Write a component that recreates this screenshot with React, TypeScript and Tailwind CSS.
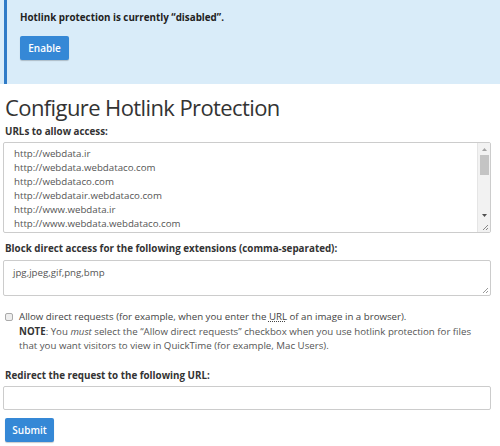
import React from 'react';

const urls = [
  'http://webdata.ir',
  'http://webdata.webdataco.com',
  'http://webdataco.com',
  'http://webdatair.webdataco.com',
  'http://www.webdata.ir',
  'http://www.webdata.webdataco.com',
  'http://webdataco.ir',
];

export default function App() {
  return (
    <div className="w-[500px] h-[446px] overflow-hidden bg-white text-[#333] font-['Open_Sans',sans-serif]">
      {/* Alert */}
      <div className="bg-[#d9ecf9] pl-[4px] h-[84px]">
        <div className="h-full border-l-[3px] border-[#2f7bc7] pl-[13px] pt-[9px]">
          <p className="text-[9.8px] font-bold leading-[18px] text-[#222]">
            Hotlink protection is currently “disabled”.
          </p>
          <button className="mt-[9px] h-[24px] w-[49px] rounded-[2px] bg-[#3588d6] text-white text-[10px] font-semibold shadow-[0_1px_1px_rgba(0,0,0,0.2)]">
            Enable
          </button>
        </div>
      </div>

      <div className="px-[3px]">
        <h1 className="mt-[8px] ml-[2px] text-[22px] tracking-[-0.6px] leading-[30px] font-normal text-[#333]">
          Configure Hotlink Protection
        </h1>

        <label className="block ml-[2px] mt-[1px] text-[9.8px] font-bold leading-[17px]">URLs to allow access:</label>
        <div className="mt-[2px] w-[488px] h-[91px] border border-[#ccc] rounded-[2px] flex overflow-hidden">
          <div className="flex-1 pl-[10px] pt-[4px] text-[9.7px] leading-[14px] text-[#555]">
            {urls.map((u) => (
              <div key={u}>{u}</div>
            ))}
          </div>
          <div className="w-[13px] flex flex-col items-center bg-[#f2f2f2] border-l border-[#e5e5e5]">
            <svg width="9" height="9" viewBox="0 0 9 9" className="mt-[2px]">
              <path d="M2 6 L4.5 3 L7 6 Z" fill="#a3a3a3" />
            </svg>
            <div className="w-[9px] h-[20px] bg-[#c4c4c4] mt-[1px]" />
            <div className="flex-1" />
            <svg width="9" height="9" viewBox="0 0 9 9" className="mb-[2px]">
              <path d="M2 3 L4.5 6 L7 3 Z" fill="#505050" />
            </svg>
            <svg width="9" height="9" viewBox="0 0 9 9" className="mb-[1px]">
              <path d="M8 3 L3 8 M8 6 L6 8" stroke="#888" strokeWidth="1" />
            </svg>
          </div>
        </div>

        <label className="block ml-[2px] mt-[7px] text-[9.8px] font-bold leading-[17px]">
          Block direct access for the following extensions (comma-separated):
        </label>
        <div className="relative mt-[3px] w-[488px] h-[36px] border border-[#ccc] rounded-[2px] pl-[9px] pt-[5px] text-[9.7px] leading-[14px] text-[#555]">
          jpg,jpeg,gif,png,bmp
          <svg width="8" height="8" viewBox="0 0 8 8" className="absolute right-[1px] bottom-[1px]">
            <path d="M7 2 L2 7 M7 5 L5 7" stroke="#999" strokeWidth="1" />
          </svg>
        </div>

        <div className="flex mt-[14px] ml-[2px]">
          <div className="w-[8px] h-[8px] mt-[3px] border border-[#aaa] rounded-[2px] bg-[#eee] shrink-0" />
          <div className="ml-[6px] w-[462px] text-[9.7px] leading-[14px] text-[#444]">
            <div>
              Allow direct requests (for example, when you enter the <span className="underline decoration-dotted">URL</span> of an image in a browser).
            </div>
            <div className="mt-[1px] text-[#555]">
              <span className="font-bold text-[#333]">NOTE</span>: You <em>must</em> select the “Allow direct requests” checkbox when you use hotlink protection for files that you want visitors to view in QuickTime (for example, Mac Users).
            </div>
          </div>
        </div>

        <label className="block ml-[2px] mt-[14px] text-[9.8px] font-bold leading-[17px]">
          Redirect the request to the following URL:
        </label>
        <div className="mt-[2px] w-[488px] h-[24px] border border-[#ccc] rounded-[2px]" />

        <button className="mt-[8px] ml-[2px] h-[24px] w-[49px] rounded-[2px] bg-[#3588d6] text-white text-[10px] font-semibold shadow-[0_1px_1px_rgba(0,0,0,0.2)]">
          Submit
        </button>
      </div>
    </div>
  );
}
